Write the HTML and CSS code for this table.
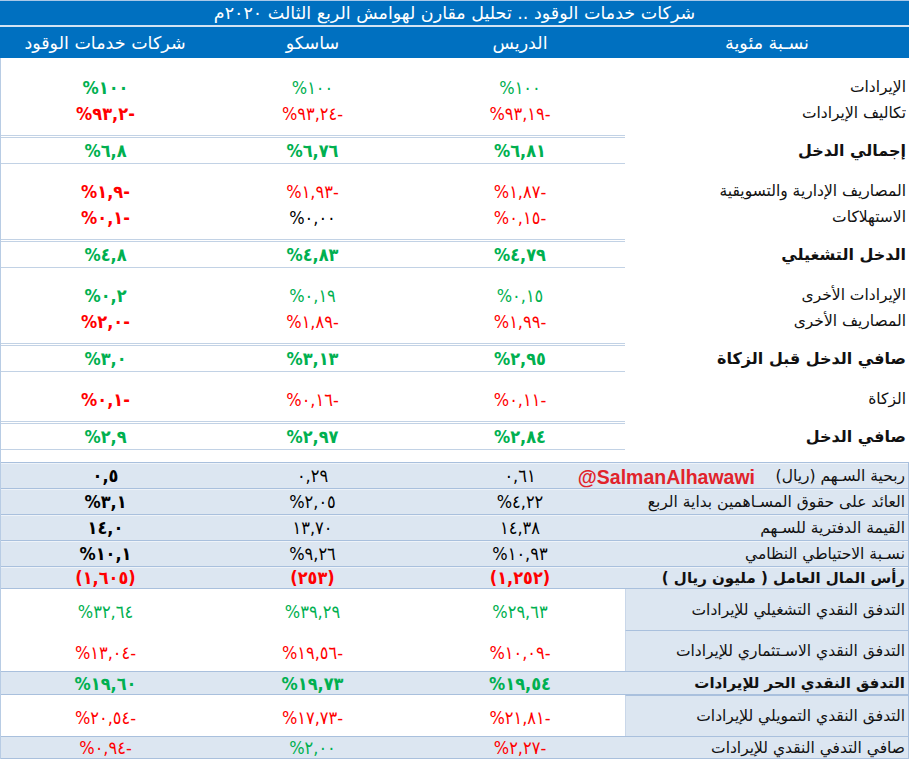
FILE: index.html
```html
<!DOCTYPE html>
<html lang="ar" dir="rtl">
<head>
<meta charset="utf-8">
<title>شركات خدمات الوقود</title>
<link rel="stylesheet" href="styles.css">
</head>
<body>
<div class="sheet">
  <div class="title">شركات خدمات الوقود .. تحليل مقارن لهوامش الربع الثالث ٢٠٢٠م</div>
  <div class="row head">
    <div class="hc">نسـبة مئوية</div>
    <div class="hc">الدريس</div>
    <div class="hc">ساسكو</div>
    <div class="hc">شركات خدمات الوقود</div>
  </div>

  <div class="body">
    <div class="group">
      <div class="row line">
        <div class="lab">الإيرادات</div>
        <div class="v g"><span class="n">%١٠٠</span></div>
        <div class="v g"><span class="n">%١٠٠</span></div>
        <div class="v g b"><span class="n">%١٠٠</span></div>
      </div>
      <div class="row line">
        <div class="lab">تكاليف الإيرادات</div>
        <div class="v r"><span class="n">%٩٣,١٩-</span></div>
        <div class="v r"><span class="n">%٩٣,٢٤-</span></div>
        <div class="v r b"><span class="n">%٩٣,٢-</span></div>
      </div>
    </div>
    <div class="row total">
      <div class="lab">إجمالي الدخل</div>
      <div class="v g"><span class="n">%٦,٨١</span></div>
      <div class="v g"><span class="n">%٦,٧٦</span></div>
      <div class="v g"><span class="n">%٦,٨</span></div>
    </div>

    <div class="group">
      <div class="row line">
        <div class="lab">المصاريف الإدارية والتسويقية</div>
        <div class="v r"><span class="n">%١,٨٧-</span></div>
        <div class="v r"><span class="n">%١,٩٣-</span></div>
        <div class="v r b"><span class="n">%١,٩-</span></div>
      </div>
      <div class="row line">
        <div class="lab">الاستهلاكات</div>
        <div class="v r"><span class="n">%٠,١٥-</span></div>
        <div class="v k"><span class="n">%٠,٠٠</span></div>
        <div class="v r b"><span class="n">%٠,١-</span></div>
      </div>
    </div>
    <div class="row total">
      <div class="lab">الدخل التشغيلي</div>
      <div class="v g"><span class="n">%٤,٧٩</span></div>
      <div class="v g"><span class="n">%٤,٨٣</span></div>
      <div class="v g"><span class="n">%٤,٨</span></div>
    </div>

    <div class="group">
      <div class="row line">
        <div class="lab">الإيرادات الأخرى</div>
        <div class="v g"><span class="n">%٠,١٥</span></div>
        <div class="v g"><span class="n">%٠,١٩</span></div>
        <div class="v g b"><span class="n">%٠,٢</span></div>
      </div>
      <div class="row line">
        <div class="lab">المصاريف الأخرى</div>
        <div class="v r"><span class="n">%١,٩٩-</span></div>
        <div class="v r"><span class="n">%١,٨٩-</span></div>
        <div class="v r b"><span class="n">%٢,٠-</span></div>
      </div>
    </div>
    <div class="row total">
      <div class="lab">صافي الدخل قبل الزكاة</div>
      <div class="v g"><span class="n">%٢,٩٥</span></div>
      <div class="v g"><span class="n">%٣,١٣</span></div>
      <div class="v g"><span class="n">%٣,٠</span></div>
    </div>

    <div class="group">
      <div class="row line">
        <div class="lab">الزكاة</div>
        <div class="v r"><span class="n">%٠,١١-</span></div>
        <div class="v r"><span class="n">%٠,١٦-</span></div>
        <div class="v r b"><span class="n">%٠,١-</span></div>
      </div>
    </div>
    <div class="row total">
      <div class="lab">صافي الدخل</div>
      <div class="v g"><span class="n">%٢,٨٤</span></div>
      <div class="v g"><span class="n">%٢,٩٧</span></div>
      <div class="v g"><span class="n">%٢,٩</span></div>
    </div>

    <div class="shaded">
      <div class="row srow eps">
        <div class="lab">ربحية السـهم (ريال)</div>
        <div class="v k"><span class="n">٠,٦١</span></div>
        <div class="v k"><span class="n">٠,٢٩</span></div>
        <div class="v k b"><span class="n">٠,٥</span></div>
        <div class="tag">@SalmanAlhawawi</div>
      </div>
      <div class="row srow">
        <div class="lab">العائد على حقوق المسـاهمين بداية الربع</div>
        <div class="v k"><span class="n">%٤,٢٢</span></div>
        <div class="v k"><span class="n">%٢,٠٥</span></div>
        <div class="v k b"><span class="n">%٣,١</span></div>
      </div>
      <div class="row srow">
        <div class="lab">القيمة الدفترية للسـهم</div>
        <div class="v k"><span class="n">١٤,٣٨</span></div>
        <div class="v k"><span class="n">١٣,٧٠</span></div>
        <div class="v k b"><span class="n">١٤,٠</span></div>
      </div>
      <div class="row srow">
        <div class="lab">نسـبة الاحتياطي النظامي</div>
        <div class="v k"><span class="n">%١٠,٩٣</span></div>
        <div class="v k"><span class="n">%٩,٢٦</span></div>
        <div class="v k b"><span class="n">%١٠,١</span></div>
      </div>
      <div class="row srow wc">
        <div class="lab">رأس المال العامل ( مليون ريال )</div>
        <div class="v r"><span class="n">(١,٢٥٢)</span></div>
        <div class="v r"><span class="n">(٢٥٣)</span></div>
        <div class="v r"><span class="n">(١,٦٠٥)</span></div>
      </div>
    </div>

    <div class="cash">
      <div class="row crow tall first">
        <div class="lab">التدفق النقدي التشغيلي للإيرادات</div>
        <div class="v g"><span class="n">%٢٩,٦٣</span></div>
        <div class="v g"><span class="n">%٣٩,٢٩</span></div>
        <div class="v g"><span class="n">%٣٢,٦٤</span></div>
      </div>
      <div class="row crow tall">
        <div class="lab">التدفق النقدي الاسـتثماري للإيرادات</div>
        <div class="v r"><span class="n">%١٠,٠٩-</span></div>
        <div class="v r"><span class="n">%١٩,٥٦-</span></div>
        <div class="v r"><span class="n">%١٣,٠٤-</span></div>
      </div>
      <div class="row crow full fcf">
        <div class="lab">التدفق النقدي الحر للإيرادات</div>
        <div class="v g"><span class="n">%١٩,٥٤</span></div>
        <div class="v g"><span class="n">%١٩,٧٣</span></div>
        <div class="v g"><span class="n">%١٩,٦٠</span></div>
      </div>
      <div class="row crow tall">
        <div class="lab">التدفق النقدي التمويلي للإيرادات</div>
        <div class="v r"><span class="n">%٢١,٨١-</span></div>
        <div class="v r"><span class="n">%١٧,٧٣-</span></div>
        <div class="v r"><span class="n">%٢٠,٥٤-</span></div>
      </div>
      <div class="row crow full net">
        <div class="lab">صافي التدفي النقدي للإيرادات</div>
        <div class="v r"><span class="n">%٢,٢٧-</span></div>
        <div class="v g"><span class="n">%٢,٠٠</span></div>
        <div class="v r"><span class="n">%٠,٩٤-</span></div>
      </div>
    </div>
  </div>
</div>
</body>
</html>
```

FILE: styles.css
```css
* {
  box-sizing: border-box;
  margin: 0;
  padding: 0;
}

body {
  margin: 0;
  background: #ffffff;
  font-family: "DejaVu Sans", sans-serif;
  color: #111111;
}

.sheet {
  width: 909px;
  direction: rtl;
}

.title {
  height: 27px;
  background: #0070c0;
  border-top: 1px solid #a9c8e8;
  border-bottom: 2px solid #d3e3f3;
  color: #ffffff;
  font-size: 17.5px;
  line-height: 24px;
  text-align: center;
}

.row {
  display: grid;
  grid-template-columns: 284px 210px 205px 1fr;
}

.head {
  height: 31px;
  background: #0070c0;
  color: #ffffff;
  font-size: 17.5px;
  align-items: center;
}

.hc {
  text-align: center;
}

.body {
  border-left: 1px solid #b8cce4;
  padding-top: 2px;
}

.group {
  padding: 14px 0 9px;
}

.line {
  height: 26px;
  align-items: center;
}

.lab {
  text-align: right;
  padding-right: 3px;
  font-size: 15.5px;
  white-space: nowrap;
}

.v {
  text-align: center;
  font-family: "DejaVu Sans Condensed", "DejaVu Sans", sans-serif;
  font-size: 18px;
}

.n {
  direction: ltr;
  unicode-bidi: bidi-override;
}

.b {
  font-weight: bold;
}

.g { color: #00b050; }
.r { color: #ff0000; }
.k { color: #000000; }

.total {
  height: 29px;
}

.total .lab {
  font-weight: bold;
  font-size: 16px;
  line-height: 25px;
  align-self: end;
  padding-bottom: 1px;
}

.total .v {
  font-weight: bold;
  border-top: 3px double #c2d2e5;
  border-bottom: 1px solid #c2d2e5;
  line-height: 25px;
}

.shaded {
  margin-top: 12px;
  background: #dce6f1;
  border-bottom: 1px solid #a9c0dd;
}

.srow {
  height: 26px;
  align-items: center;
  border-top: 1px solid #a9c0dd;
  box-shadow: inset 0 1px 0 #eef3f9;
  position: relative;
}

.srow .lab,
.crow .lab {
  border-right: 1px solid #a9c0dd;
  align-self: stretch;
  display: flex;
  align-items: center;
  justify-content: flex-start;
}

.wc {
  height: 22px;
}

.wc .lab {
  font-weight: bold;
  font-size: 15px;
}

.wc .v {
  font-weight: bold;
}

.tag {
  position: absolute;
  right: 154px;
  top: 3px;
  font-family: "Liberation Sans", Arial, sans-serif;
  font-weight: bold;
  font-size: 19.5px;
  color: #e1232b;
  direction: ltr;
}

.crow {
  align-items: center;
}

.crow .v {
  padding-top: 3px;
}

.crow .lab {
  background: #dce6f1;
  border-top: 1px solid #a9c0dd;
  border-left: 1px solid #c9d7e9;
}

.crow.first .lab {
  border-top: none;
}

.tall {
  height: 41px;
}

.full {
  background: #dce6f1;
  border-top: 1px solid #a9c0dd;
  border-bottom: 1px solid #a9c0dd;
}

.full .v {
  padding-top: 0;
}

.full .lab {
  border-top: none;
  border-left: none;
}

.fcf {
  height: 24px;
}

.fcf .lab {
  font-weight: bold;
  font-size: 15px;
}

.fcf .v {
  font-weight: bold;
}

.net {
  height: 23px;
}
```
